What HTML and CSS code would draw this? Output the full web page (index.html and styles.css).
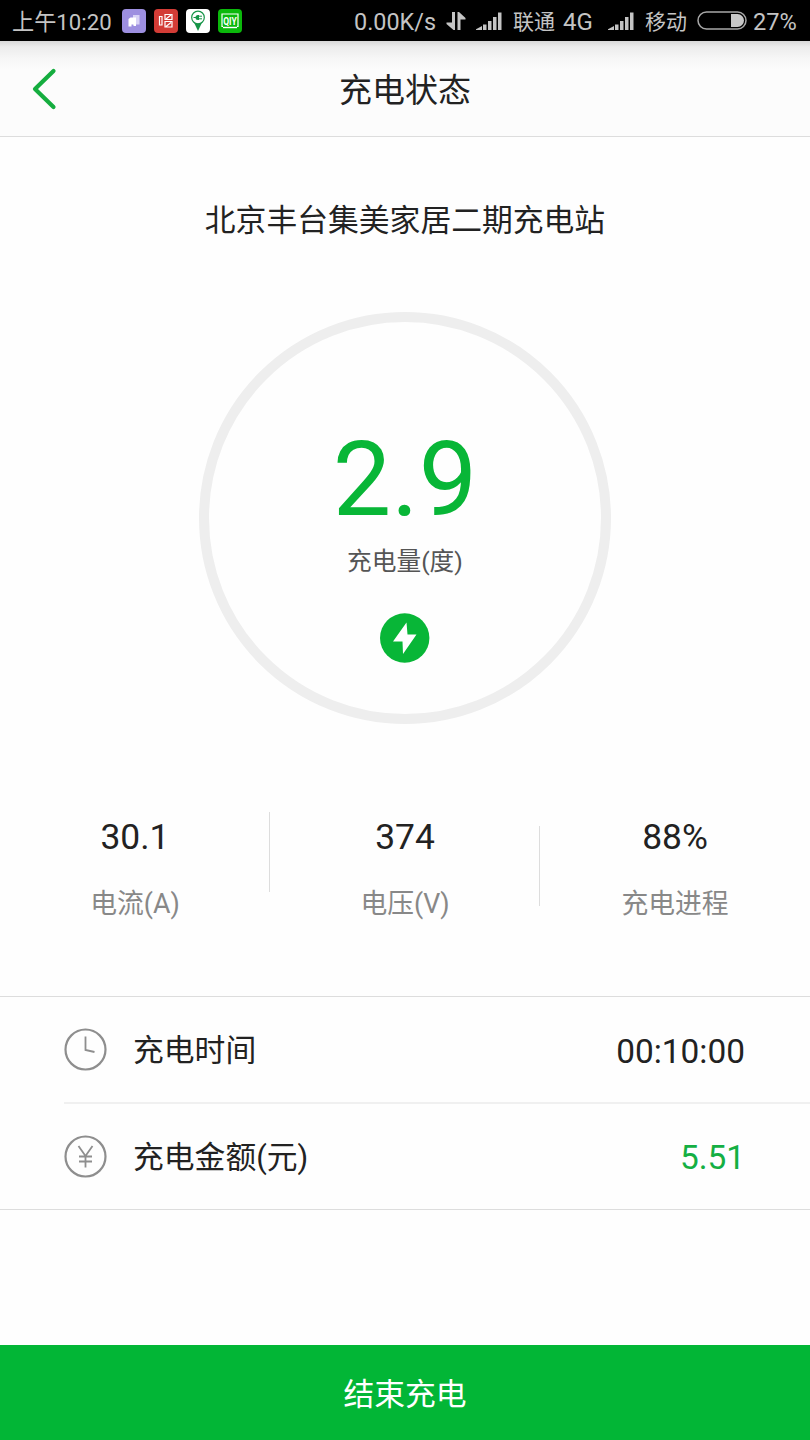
FILE: index.html
```html
<!DOCTYPE html>
<html lang="zh-CN">
	<head>
		<meta charset="UTF-8">
		<meta name="viewport" content="width=device-width, initial-scale=1">
		<title>充电状态</title>
		<link rel="stylesheet" href="styles.css">
	</head>

	<body>
		<div class="wrapper">

			<div class="status-bar">
				<span class="clock">上午10:20</span>
				<div class="apps">
					<svg width="24" height="24" viewBox="0 0 24 24">
						<rect width="24" height="24" rx="4" fill="#9d8fe0"/>
						<path d="M11 6h6.500v9.500H11z" fill="#d8d2f6"/>
						<path d="M6.500 10l2-1.500h5.500v8.500h-2.500v-1.500h-2v2h-3z" fill="#fff"/>
					</svg>
					<svg width="24" height="24" viewBox="0 0 24 24">
						<rect width="24" height="24" rx="4" fill="#d33c36"/>
						<path d="M5.500 7.500H8v8.500H5.500zM11 5.500h7v5h-7zM11 12.500h7v5.500h-7zM12 10l5-4M12 17.500l5-4" fill="none" stroke="#fff" stroke-width="1.200"/>
					</svg>
					<svg width="24" height="24" viewBox="0 0 24 24">
						<rect width="24" height="24" rx="4" fill="#fff"/>
						<path d="M8 13.500h8L12 22z" fill="#159447"/>
						<circle cx="12" cy="8.500" r="6.300" fill="#fff" stroke="#159447" stroke-width="1.200"/>
						<path d="M13 6h-1a2.500 2.500 0 0 0 0 5h1z" fill="#159447"/>
						<path d="M7.500 8.500H10M13 7.200h3M13 9.800h3" stroke="#159447"/>
					</svg>
					<svg width="24" height="24" viewBox="0 0 24 24">
						<rect width="24" height="24" rx="4" fill="#0bb80b"/>
						<path d="M5 17.500H4V5h16v12.500h-1" fill="none" stroke="#fff" stroke-width="1.200"/>
						<path d="M5 18.500h14" stroke="#fff" stroke-width="1.400"/>
						<text class="app-text" x="12" y="15.500" text-anchor="middle" textLength="13.500" lengthAdjust="spacingAndGlyphs">QIY</text>
					</svg>
				</div>
				<span class="speed">0.00K/s</span>
				<svg class="arrows" width="20" height="20" viewBox="0 0 20 20">
					<path d="M6 1h3v18H7.500L.5 13v-1.500H6zM11.500 19h3V8.500h5V7l-6.500-6h-1.500z" fill="#c4c4c4"/>
				</svg>
				<svg class="signal" width="26" height="18" viewBox="0 0 26 18">
					<path d="M0 18v-.8L6 14v4zM7 12.500h3.500V18H7zM12 9h3.500v9H12zM17 5h3.500v13H17zM22 .5h3.500V18H22z" fill="#c4c4c4"/>
				</svg>
				<span class="carrier">联通</span>
				<span class="network">4G</span>
				<svg class="signal" width="26" height="18" viewBox="0 0 26 18">
					<path d="M0 18v-.8L6 14v4zM7 12.500h3.500V18H7zM12 9h3.500v9H12zM17 5h3.500v13H17zM22 .5h3.500V18H22z" fill="#c4c4c4"/>
				</svg>
				<span class="carrier">移动</span>
				<svg class="battery" width="50" height="19" viewBox="0 0 50 19">
					<rect x="1" y="1" width="48" height="17" rx="8.500" fill="none" stroke="#a8a8a8" stroke-width="1.500"/>
					<path d="M34 3h6.500a6.500 6.500 0 0 1 0 13H34z" fill="#c8c8c8"/>
				</svg>
				<span class="percent">27%</span>
			</div>

			<div class="header">
				<svg class="back" width="26" height="42" viewBox="0 0 26 42">
					<path d="M22.500 3L4 21l18.500 18" fill="none" stroke="#15ad3f" stroke-width="4.200" stroke-linecap="round" stroke-linejoin="round"/>
				</svg>
				<h1>充电状态</h1>
			</div>

			<h2 class="station">北京丰台集美家居二期充电站</h2>

			<div class="gauge">
				<div class="gauge-value">2.9</div>
				<div class="gauge-label">充电量(度)</div>
				<svg width="50" height="50" viewBox="0 0 50 50">
					<circle cx="24.700" cy="25" r="24.700" fill="#08b637"/>
					<path d="M26.500 9.500L13 28.500h9.500L23 41l13.500-19.500h-9z" fill="#fff"/>
				</svg>
			</div>

			<div class="stats">
				<div class="stat">
					<div class="stat-value">30.1</div>
					<div class="stat-label">电流(A)</div>
				</div>
				<div class="stat">
					<div class="stat-value">374</div>
					<div class="stat-label">电压(V)</div>
				</div>
				<div class="stat">
					<div class="stat-value">88%</div>
					<div class="stat-label">充电进程</div>
				</div>
			</div>

			<div class="list">
				<div class="row">
					<svg width="43" height="43" viewBox="0 0 43 43">
						<g fill="none" stroke="#8e8e8e">
							<circle cx="21.500" cy="21.500" r="20" stroke-width="2.200"/>
							<path d="M21.500 8.500V22l9 2" stroke-width="1.800"/>
						</g>
					</svg>
					<span class="row-label">充电时间</span>
					<span class="row-value">00:10:00</span>
				</div>
				<div class="row">
					<svg width="43" height="43" viewBox="0 0 43 43">
						<g fill="none" stroke="#8e8e8e">
							<circle cx="21.500" cy="21.500" r="20" stroke-width="2.200"/>
							<path d="M14.500 11l7 10 7-10M21.500 21v11.500M15 21.500h13M15 26.500h13" stroke-width="1.800"/>
						</g>
					</svg>
					<span class="row-label">充电金额(元)</span>
					<span class="row-value money">5.51</span>
				</div>
			</div>

			<button class="stop-button">结束充电</button>
		</div>
	</body>
</html>
```
FILE: styles.css
```css
* {
	box-sizing: border-box;
	padding: 0;
	margin: 0;
	font-family: Roboto, "Noto Sans CJK SC", sans-serif;
	font-weight: 400;
}
body {
	background: #fefefe;
	color: #222;
}
svg {
	display: block;
	flex: none;
}
.wrapper {
	display: flex;
	flex-direction: column;
	height: 1440px;
	width: 810px;
}

/* phone status bar */
.status-bar {
	display: flex;
	align-items: center;
	height: 41px;
	padding-left: 12px;
	background: #000;
	color: #c4c4c4;
	font-size: 23px;
	line-height: 38px;
	white-space: nowrap;
}
.status-bar span {
	flex: none;
	padding-top: 3px;
}
.clock {
	width: 110px;
	font-size: 22.2px;
}
.apps {
	display: flex;
	gap: 8px;
	width: 232px;
}
.app-text {
	fill: #fff;
	font-size: 11px;
	font-weight: 700;
}
.speed {
	width: 92px;
	font-size: 23.4px;
}
.arrows {
	margin-right: 10px;
}
.carrier {
	width: 50px;
	margin-left: 11px;
	font-size: 21px;
}
.network {
	width: 45px;
	font-size: 24px;
}
.battery {
	margin-left: 2px;
}
.percent {
	margin-left: 6px;
	font-size: 23.6px;
}

.header {
	display: flex;
	align-items: center;
	justify-content: center;
	position: relative;
	height: 96px;
	padding-top: 4px;
	background: linear-gradient(#d8d8d8, #ececec 6px, #f6f6f6 17px, #fcfcfc 28px);
	border-bottom: 1px solid #ddd;
}
.header h1 {
	font-size: 33px;
	line-height: 48px;
}
.back {
	position: absolute;
	left: 31px;
	top: 27px;
}
.station {
	margin-top: 60px;
	font-size: 30.8px;
	line-height: 48px;
	text-align: center;
}

/* gauge */
.gauge {
	display: flex;
	flex-direction: column;
	align-items: center;
	width: 412px;
	height: 412px;
	margin: 67px auto 0;
	padding-top: 98px;
	border: 10px solid #eee;
	border-radius: 50%;
}
.gauge-value {
	color: #08b637;
	font-size: 104px;
	line-height: 120px;
}
.gauge-label {
	margin-top: 2px;
	margin-bottom: 31px;
	color: #555;
	font-size: 24.7px;
	line-height: 40px;
}

/* current, voltage, progress */
.stats {
	display: grid;
	grid-template-columns: repeat(3, 1fr);
	height: 272px;
	padding-top: 88px;
}
.stat {
	position: relative;
	text-align: center;
}
.stat + .stat:before {
	content: "";
	position: absolute;
	left: -1px;
	top: 0;
	width: 1px;
	height: 80px;
	background: #ddd;
}
.stat:last-child:before {
	top: 14px;
}
.stat-value {
	font-size: 35.4px;
	line-height: 51px;
}
.stat-label {
	margin-top: 20px;
	color: #888;
	font-size: 26.8px;
	line-height: 42px;
}

.list {
	border-top: 1px solid #ddd;
	border-bottom: 1px solid #ddd;
}
.row {
	display: flex;
	align-items: center;
	height: 105px;
	margin-left: 64px;
	padding-right: 65px;
}
.row + .row {
	height: 107px;
	border-top: 2px solid #f0f0f0;
}
.row-label {
	margin-left: 26px;
	padding-bottom: 4px;
	font-size: 30.8px;
}
.row-value {
	margin-left: auto;
	padding-top: 3px;
	font-size: 33.4px;
}
.row + .row .row-value {
	padding-top: 1px;
}
.money {
	color: #14af43;
}
.stop-button {
	height: 95px;
	margin-top: auto;
	padding-bottom: 3px;
	border: none;
	background: #02b636;
	color: #fff;
	font-size: 30.8px;
}
```
